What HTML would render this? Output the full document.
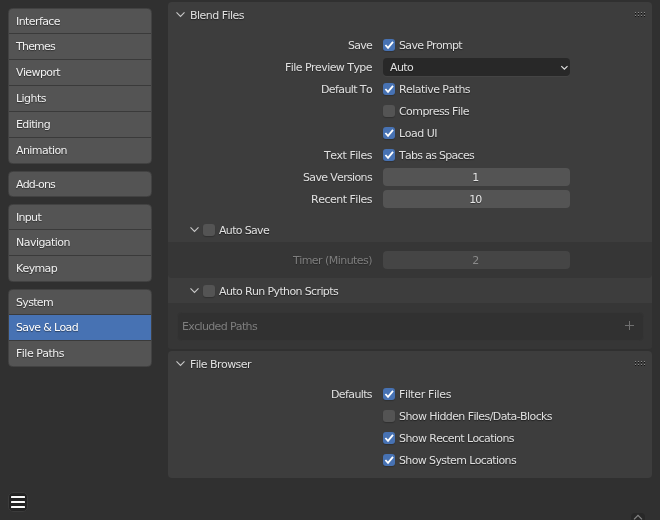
<!DOCTYPE html>
<html lang="en">
<head>
<meta charset="utf-8">
<title>Blender Preferences</title>
<style>
html,body{margin:0;padding:0;}
body{width:660px;height:520px;overflow:hidden;background:#303030;position:relative;
  font-family:"DejaVu Sans","Liberation Sans",sans-serif;font-size:11px;color:#e0e0e0;line-height:14px;font-kerning:none;font-variant-ligatures:none;}
.abs{position:absolute;}
/* nav */
.grp{position:absolute;left:8px;width:144px;box-sizing:border-box;border:1px solid #424242;border-radius:4.5px;overflow:hidden;background:#3a3a3a;}
.tab{height:25px;margin-bottom:1px;background:#545454;color:#f0f0f0;box-sizing:border-box;padding:6px 0 0 7px;
  text-shadow:0 1px 1px rgba(0,0,0,.45);white-space:nowrap;}
.tab:first-child{height:24px;padding-top:6px;}
.tab:last-child{margin-bottom:0;}
.tab.sel{background:#4772b3;color:#fff;}
/* panels */
.panel{position:absolute;left:168px;width:484px;background:#3d3d3d;border-radius:4px;}
.sub{position:absolute;left:168px;width:484px;background:#363636;}
.lbl{position:absolute;white-space:nowrap;height:14px;margin-top:1px;}
.r{text-align:right;left:172px;width:200px;text-shadow:0 1px 1px rgba(0,0,0,.3);}
.dis{color:#7e7e7e;}
.sh{text-shadow:0 1px 1px rgba(0,0,0,.55);}
.cb{position:absolute;width:12px;height:12px;border-radius:3px;background:#545454;box-shadow:0 1px 1px rgba(0,0,0,.22);}
.cb.on{background:#4772b3;}
.cb svg{position:absolute;left:0;top:0;}
.num{position:absolute;left:383px;width:187px;height:18px;border-radius:4px;background:#545454;text-align:center;
  box-sizing:border-box;padding:3px 2.5px 0 0;color:#e6e6e6;text-shadow:0 1px 1px rgba(0,0,0,.4);}
.menu{box-shadow:0 1px 0 rgba(255,255,255,.04);position:absolute;left:383px;width:187px;height:18px;border-radius:4px;background:#282828;box-sizing:border-box;
  padding:3px 0 0 7px;color:#e0e0e0;text-shadow:0 1px 1px rgba(0,0,0,.4);}
.box{position:absolute;left:176.5px;top:311.5px;width:467px;height:29px;border-radius:4.5px;background:#313131;box-sizing:border-box;border:1px solid #353535;}
</style>
</head>
<body>
<div id="w" style="position:absolute;left:0;top:0;width:660px;height:520px;will-change:transform;">

<!-- navigation -->
<div class="grp" style="top:8px">
  <div class="tab" style="letter-spacing:-0.583px;">Interface</div><div class="tab" style="letter-spacing:-0.779px;">Themes</div><div class="tab" style="letter-spacing:-0.612px;">Viewport</div>
  <div class="tab" style="letter-spacing:-0.530px;">Lights</div><div class="tab" style="letter-spacing:-0.616px;">Editing</div><div class="tab" style="letter-spacing:-0.564px;">Animation</div>
</div>
<div class="grp" style="top:171px"><div class="tab" style="letter-spacing:-0.842px;">Add-ons</div></div>
<div class="grp" style="top:204px">
  <div class="tab" style="letter-spacing:-0.697px;">Input</div><div class="tab" style="letter-spacing:-0.533px;">Navigation</div><div class="tab" style="letter-spacing:-0.655px;">Keymap</div>
</div>
<div class="grp" style="top:289px">
  <div class="tab" style="letter-spacing:-0.670px;">System</div><div class="tab sel" style="letter-spacing:-0.650px;">Save &amp; Load</div><div class="tab" style="letter-spacing:-0.509px;">File Paths</div>
</div>

<!-- hamburger -->
<div class="abs" style="left:8px;top:492px;width:20px;height:20px;border-radius:5px;background:#252525;box-sizing:border-box;border:1px solid #3b3b3b;"></div>
<div class="abs" style="left:11px;top:496px;width:14px;height:2px;background:#f8f8f8;border-radius:.5px;box-shadow:0 0 1.5px rgba(0,0,0,.75);"></div>
<div class="abs" style="left:11px;top:501px;width:14px;height:2px;background:#f8f8f8;border-radius:.5px;box-shadow:0 0 1.5px rgba(0,0,0,.75);"></div>
<div class="abs" style="left:11px;top:506px;width:14px;height:2px;background:#f8f8f8;border-radius:.5px;box-shadow:0 0 1.5px rgba(0,0,0,.75);"></div>

<!-- panel 1 -->
<div class="panel" style="top:2px;height:347px;"></div>
<div class="sub" style="top:242px;height:36px;border-radius:0 0 4px 4px;"></div>
<div class="sub" style="top:303px;height:46px;border-radius:0 0 4px 4px;"></div>

<svg class="abs" style="left:175px;top:10px" width="11" height="9" viewBox="0 0 11 9"><path d="M1.5 2.3 L5.5 6.5 L9.5 2.3" fill="none" stroke="#c8c8c8" stroke-width="1.1"/></svg>
<div class="lbl sh" style="left:190px;top:8px;letter-spacing:-0.524px;">Blend Files</div>

<div class="lbl r" style="top:38px;letter-spacing:-0.750px;">Save</div>
<div class="cb on" style="left:383px;top:39px;"><svg width="12" height="12" viewBox="0 0 12 12"><path d="M2.4 6 L5 8.8 L10 2.8" fill="none" stroke="#fff" stroke-width="1.8"/></svg></div>
<div class="lbl sh" style="left:399px;top:38px;letter-spacing:-0.672px;">Save Prompt</div>

<div class="lbl r" style="top:60px;letter-spacing:-0.555px;">File Preview Type</div>
<div class="menu" style="top:58px;letter-spacing:-0.635px;">Auto</div>
<svg class="abs" style="left:559px;top:63px" width="11" height="9" viewBox="0 0 11 9"><path d="M2.3 3.1 L5.4 6.2 L8.5 3.1" fill="none" stroke="#dedede" stroke-width="1.2"/></svg>

<div class="lbl r" style="top:82px;letter-spacing:-0.614px;">Default To</div>
<div class="cb on" style="left:383px;top:83px;"><svg width="12" height="12" viewBox="0 0 12 12"><path d="M2.4 6 L5 8.8 L10 2.8" fill="none" stroke="#fff" stroke-width="1.8"/></svg></div>
<div class="lbl sh" style="left:399px;top:82px;letter-spacing:-0.553px;">Relative Paths</div>

<div class="cb" style="left:383px;top:105px;"></div>
<div class="lbl sh" style="left:399px;top:104px;letter-spacing:-0.582px;">Compress File</div>

<div class="cb on" style="left:383px;top:127px;"><svg width="12" height="12" viewBox="0 0 12 12"><path d="M2.4 6 L5 8.8 L10 2.8" fill="none" stroke="#fff" stroke-width="1.8"/></svg></div>
<div class="lbl sh" style="left:399px;top:126px;letter-spacing:-0.482px;">Load UI</div>

<div class="lbl r" style="top:148px;letter-spacing:-0.474px;">Text Files</div>
<div class="cb on" style="left:383px;top:149px;"><svg width="12" height="12" viewBox="0 0 12 12"><path d="M2.4 6 L5 8.8 L10 2.8" fill="none" stroke="#fff" stroke-width="1.8"/></svg></div>
<div class="lbl sh" style="left:399px;top:148px;letter-spacing:-0.706px;">Tabs as Spaces</div>

<div class="lbl r" style="top:170px;letter-spacing:-0.656px;">Save Versions</div>
<div class="num" style="top:168px;letter-spacing:-0.999px;">1</div>
<div class="lbl r" style="top:192px;letter-spacing:-0.495px;">Recent Files</div>
<div class="num" style="top:190px;letter-spacing:-0.999px;">10</div>

<!-- sub 1 -->
<svg class="abs" style="left:189px;top:225px" width="11" height="9" viewBox="0 0 11 9"><path d="M1.5 2.3 L5.5 6.5 L9.5 2.3" fill="none" stroke="#c8c8c8" stroke-width="1.1"/></svg>
<div class="cb" style="left:203px;top:224px;"></div>
<div class="lbl sh" style="left:219px;top:223px;letter-spacing:-0.671px;">Auto Save</div>
<div class="lbl r dis" style="top:253px;letter-spacing:-0.544px;">Timer (Minutes)</div>
<div class="num" style="top:251px;background:#454545;color:#8a8a8a;text-shadow:none;letter-spacing:-0.999px;">2</div>

<!-- sub 2 -->
<svg class="abs" style="left:189px;top:286px" width="11" height="9" viewBox="0 0 11 9"><path d="M1.5 2.3 L5.5 6.5 L9.5 2.3" fill="none" stroke="#c8c8c8" stroke-width="1.1"/></svg>
<div class="cb" style="left:203px;top:285px;"></div>
<div class="lbl sh" style="left:219px;top:284px;letter-spacing:-0.625px;">Auto Run Python Scripts</div>
<div class="box"></div>
<div class="lbl dis" style="left:182px;top:319px;letter-spacing:-0.654px;">Excluded Paths</div>
<svg class="abs" style="left:624px;top:320px" width="11" height="11" viewBox="0 0 11 11"><path d="M5.5 1 V10 M1 5.5 H10" fill="none" stroke="#707070" stroke-width="1"/></svg>

<!-- panel 2 -->
<div class="panel" style="top:351px;height:127px;"></div>
<svg class="abs" style="left:175px;top:359px" width="11" height="9" viewBox="0 0 11 9"><path d="M1.5 2.3 L5.5 6.5 L9.5 2.3" fill="none" stroke="#c8c8c8" stroke-width="1.1"/></svg>
<div class="lbl sh" style="left:190px;top:357px;letter-spacing:-0.543px;">File Browser</div>

<div class="lbl r" style="top:387px;letter-spacing:-0.615px;">Defaults</div>
<div class="cb on" style="left:383px;top:388px;"><svg width="12" height="12" viewBox="0 0 12 12"><path d="M2.4 6 L5 8.8 L10 2.8" fill="none" stroke="#fff" stroke-width="1.8"/></svg></div>
<div class="lbl sh" style="left:399px;top:387px;letter-spacing:-0.373px;">Filter Files</div>
<div class="cb" style="left:383px;top:410px;"></div>
<div class="lbl sh" style="left:399px;top:409px;letter-spacing:-0.588px;">Show Hidden Files/Data-Blocks</div>
<div class="cb on" style="left:383px;top:432px;"><svg width="12" height="12" viewBox="0 0 12 12"><path d="M2.4 6 L5 8.8 L10 2.8" fill="none" stroke="#fff" stroke-width="1.8"/></svg></div>
<div class="lbl sh" style="left:399px;top:431px;letter-spacing:-0.602px;">Show Recent Locations</div>
<div class="cb on" style="left:383px;top:454px;"><svg width="12" height="12" viewBox="0 0 12 12"><path d="M2.4 6 L5 8.8 L10 2.8" fill="none" stroke="#fff" stroke-width="1.8"/></svg></div>
<div class="lbl sh" style="left:399px;top:453px;letter-spacing:-0.626px;">Show System Locations</div>

<!-- grips -->
<svg class="abs" style="left:634px;top:11px" width="12" height="7" viewBox="0 0 12 7" shape-rendering="crispEdges">
 <g fill="#8a8a8a"><rect x="1" y="1" width="1" height="1"/><rect x="4" y="1" width="1" height="1"/><rect x="7" y="1" width="1" height="1"/><rect x="10" y="1" width="1" height="1"/>
 <rect x="1" y="4" width="1" height="1"/><rect x="4" y="4" width="1" height="1"/><rect x="7" y="4" width="1" height="1"/><rect x="10" y="4" width="1" height="1"/></g>
 <g fill="#111"><rect x="1" y="2" width="1" height="1"/><rect x="4" y="2" width="1" height="1"/><rect x="7" y="2" width="1" height="1"/><rect x="10" y="2" width="1" height="1"/>
 <rect x="1" y="5" width="1" height="1"/><rect x="4" y="5" width="1" height="1"/><rect x="7" y="5" width="1" height="1"/><rect x="10" y="5" width="1" height="1"/></g>
</svg>
<svg class="abs" style="left:634px;top:360px" width="12" height="7" viewBox="0 0 12 7" shape-rendering="crispEdges">
 <g fill="#8a8a8a"><rect x="1" y="1" width="1" height="1"/><rect x="4" y="1" width="1" height="1"/><rect x="7" y="1" width="1" height="1"/><rect x="10" y="1" width="1" height="1"/>
 <rect x="1" y="4" width="1" height="1"/><rect x="4" y="4" width="1" height="1"/><rect x="7" y="4" width="1" height="1"/><rect x="10" y="4" width="1" height="1"/></g>
 <g fill="#111"><rect x="1" y="2" width="1" height="1"/><rect x="4" y="2" width="1" height="1"/><rect x="7" y="2" width="1" height="1"/><rect x="10" y="2" width="1" height="1"/>
 <rect x="1" y="5" width="1" height="1"/><rect x="4" y="5" width="1" height="1"/><rect x="7" y="5" width="1" height="1"/><rect x="10" y="5" width="1" height="1"/></g>
</svg>

<!-- scroll-up hint bottom right -->
<div class="abs" style="left:631px;top:513px;width:14px;height:12px;border-radius:4px;background:#282828;"></div>
<svg class="abs" style="left:632px;top:513px" width="12" height="7" viewBox="0 0 12 7"><path d="M2 6.4 L6 2.4 L10 6.4" fill="none" stroke="#858585" stroke-width="1.3"/></svg>

</div>
</body>
</html>
